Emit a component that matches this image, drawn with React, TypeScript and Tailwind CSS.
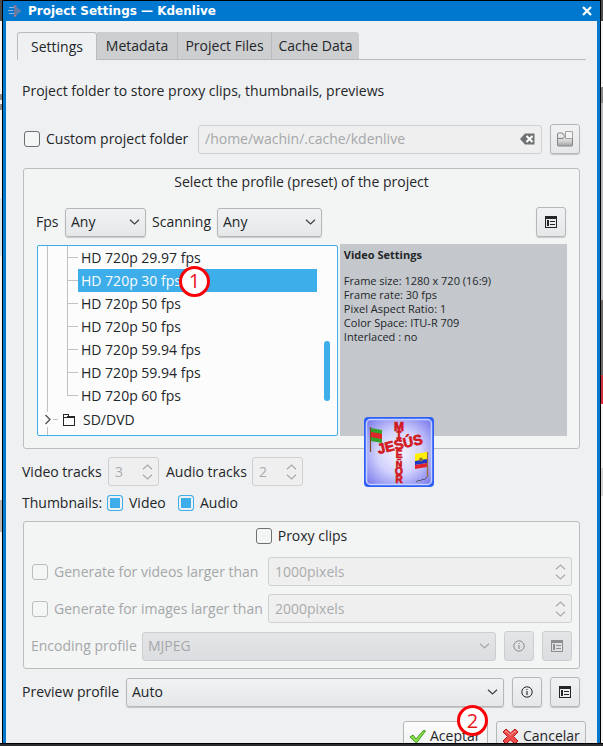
import { useState, type ReactNode } from "react";

const TREE_ITEMS = [
  "HD 720p 29.97 fps",
  "HD 720p 30 fps",
  "HD 720p 50 fps",
  "HD 720p 50 fps",
  "HD 720p 59.94 fps",
  "HD 720p 59.94 fps",
  "HD 720p 60 fps",
];

const VIDEO_SETTINGS = [
  "Frame size: 1280 x 720 (16:9)",
  "Frame rate: 30 fps",
  "Pixel Aspect Ratio: 1",
  "Color Space: ITU-R 709",
  "Interlaced : no",
];

function Chevron({ className = "" }: { className?: string }) {
  return (
    <svg viewBox="0 0 11 6" className={"h-[6px] w-[11px] fill-none stroke-current " + className} aria-hidden="true">
      <path d="M1 .7 5.5 5 10 .7" strokeWidth="1.2" />
    </svg>
  );
}

function Select({ id, value, disabled, className }: { id: string; value: string; disabled?: boolean; className: string }) {
  return (
    <div className={"relative " + className}>
      <select
        id={id}
        disabled={disabled}
        className="block h-[29px] w-full appearance-none rounded-[3px] border border-[#b4b6b8] bg-linear-to-b from-[#f1f2f3] to-[#e6e7e9] pl-[5px] text-[#232629] shadow-[0_1px_1px_rgba(0,0,0,0.18)] disabled:border-[#cbcdcf] disabled:from-[#e4e5e7] disabled:to-[#dcdde0] disabled:text-[#a5a7a9] disabled:opacity-100 disabled:shadow-none"
      >
        <option>{value}</option>
      </select>
      <Chevron className={"pointer-events-none absolute top-[11px] right-[6px] " + (disabled ? "text-[#a5a7a9]" : "text-[#3c4043]")} />
    </div>
  );
}

function Spin({ id, value, label, className }: { id: string; value: string; label?: string; className: string }) {
  return (
    <div className={"flex h-[29px] items-center rounded-[3px] border border-[#cfd0d1] bg-[#efefef] pr-[5px] pl-[6px] text-[#a9abac] " + className}>
      <input id={id} aria-label={label} disabled defaultValue={value} className="w-0 min-w-0 flex-1 bg-transparent" />
      <span className="flex flex-col gap-[4px]">
        <button type="button" disabled aria-label="Increase" className="block">
          <Chevron className="rotate-180" />
        </button>
        <button type="button" disabled aria-label="Decrease" className="block">
          <Chevron />
        </button>
      </span>
    </div>
  );
}

function Check({ label, checked, disabled }: { label: string; checked?: boolean; disabled?: boolean }) {
  return (
    <label className={"flex items-center gap-[6px] whitespace-nowrap " + (disabled ? "text-[#a5a7a9]" : "")}>
      <input
        type="checkbox"
        defaultChecked={checked}
        disabled={disabled}
        className="size-4 shrink-0 appearance-none rounded-[3px] border border-[#6d7072] bg-[#f4f5f5] checked:border-[#3daee9] checked:bg-[#3daee9] checked:shadow-[inset_0_0_0_2px_#eff0f1] disabled:border-[#babcbd]"
      />
      {label}
    </label>
  );
}

function ToolButton({ label, disabled, children }: { label: string; disabled?: boolean; children: ReactNode }) {
  return (
    <button
      type="button"
      aria-label={label}
      disabled={disabled}
      className="flex size-[30px] shrink-0 items-center justify-center rounded-[3px] border border-[#b4b6b8] bg-linear-to-b from-[#f1f2f3] to-[#e6e7e9] text-[#232629] shadow-[0_1px_1px_rgba(0,0,0,0.18)] disabled:border-[#cbcdcf] disabled:from-[#e4e5e7] disabled:to-[#dcdde0] disabled:text-[#8c8e90] disabled:shadow-none"
    >
      {children}
    </button>
  );
}

function ListIcon() {
  return (
    <svg viewBox="0 0 12 12" className="size-3 fill-current" shapeRendering="crispEdges" aria-hidden="true">
      <path d="M0 0h12v12H0zM1 3v8h10V3z" fillRule="evenodd" />
      <path d="M2 4h2v6H2zM5 5h5v1H5zM5 8h5v1H5z" />
    </svg>
  );
}

function InfoIcon() {
  return (
    <svg viewBox="0 0 12 12" className="size-3 fill-none stroke-current" aria-hidden="true">
      <circle cx="6" cy="6" r="5.2" strokeWidth="1" />
      <path d="M6 5v4M6 3v1.1" strokeWidth="1.1" />
    </svg>
  );
}

function FolderPageIcon() {
  return (
    <svg viewBox="0 0 18 18" className="size-[18px]" aria-hidden="true">
      <defs>
        <linearGradient id="folder" x2="0" y2="1">
          <stop stopColor="#f0f0f0" />
          <stop offset=".6" stopColor="#d6d6d6" />
          <stop offset="1" stopColor="#a2a2a2" />
        </linearGradient>
      </defs>
      <path d="M1.5 15V4q0-1 1-1h4l1 2h9v10q0 1-1 1h-13q-1 0-1-1z" fill="url(#folder)" stroke="#858585" />
      <path d="M2 8.5h5l1.500-2h2" fill="none" stroke="#858585" />
      <path d="M9.500 1.500h7v7h-7z" fill="#f3f3f3" stroke="#a2a2a2" />
    </svg>
  );
}

function Badge({ children, className }: { children: ReactNode; className: string }) {
  return (
    <span className={"pointer-events-none absolute z-10 flex size-[31px] items-center justify-center rounded-full border-[3px] border-[#fa0007] bg-white text-[20px] leading-none text-[#e8161b] " + className}>
      {children}
    </span>
  );
}

/* The S of JESÚS is shared with the column, so it is not repeated here. */
const STACKED = [
  { c: "M", y: 14, s: 12 },
  { c: "I", y: 22, s: 10 },
  { c: "E", y: 41, s: 10 },
  { c: "Ñ", y: 50, s: 9 },
  { c: "O", y: 58, s: 10 },
  { c: "R", y: 66, s: 10 },
];

function Logo({ className }: { className: string }) {
  return (
    <svg viewBox="0 0 70 70" className={"size-[70px] " + className} role="img" aria-label="Jesús mi Señor">
      <defs>
        <radialGradient id="glow" r=".68">
          <stop stopColor="#f6f6ff" />
          <stop offset=".5" stopColor="#d2d2fd" />
          <stop offset="1" stopColor="#7a7aec" />
        </radialGradient>
      </defs>
      <rect width="70" height="70" rx="4" fill="#2f5ff5" />
      <rect x="2.500" y="2.500" width="65" height="65" rx="4" fill="url(#glow)" stroke="#c4d0ff" strokeWidth="1.500" />
      <path d="M6.500 10v25" stroke="#7a4a25" strokeWidth="1.200" />
      <path d="m7 11 11 2v13L7 24z" fill="#35a02b" />
      <path d="m7 15 11 2v5L7 20z" fill="#e3232b" />
      <path d="M63.500 35v25" stroke="#9a6a40" strokeWidth="1.400" />
      <path d="m51 37 12-2v8l-12 2z" fill="#ffef00" />
      <path d="m51 44 12-2v4l-12 2z" fill="#1d35c9" />
      <path d="m51 48 12-2v4l-12 2z" fill="#e3232b" />
      <circle cx="57" cy="42.500" r="2" fill="#8d7a35" />
      <path d="m52 65 3-2 1 1 3-2 1 1 3-3" fill="none" stroke="#444" strokeWidth=".8" />
      <g fill="#e01b20" stroke="#c9151a" strokeWidth=".7" textAnchor="middle">
        {STACKED.map((l) => (
          <text
            key={l.c}
            x="35"
            y={l.y}
            fontSize={l.s}
            className={l.c === "I" ? "font-['DejaVu_Sans_Mono',monospace] font-bold" : "font-['Liberation_Sans',sans-serif] font-bold"}
          >
            {l.c}
          </text>
        ))}
        <text x="36" y="32" fontSize="14" transform="rotate(-13 36 28)" className="font-['Liberation_Sans',sans-serif] font-bold">
          JESÚS
        </text>
      </g>
    </svg>
  );
}

function ProfileTree() {
  const [selected, setSelected] = useState(1);
  return (
    <div role="tree" aria-label="Profiles" className="relative mt-px h-[191px] min-w-0 flex-[304_1_0%] rounded-[2px] border border-[#3daee9] bg-[#fcfcfc]">
      {TREE_ITEMS.map((name, i) => {
        const last = i === TREE_ITEMS.length - 1;
        const on = i === selected;
        return (
          <div key={i} role="treeitem" aria-selected={on} onClick={() => setSelected(i)} className="flex h-[23px] items-center pr-[20px]">
            <span className="w-[10px] self-stretch border-r border-[#c0c2c3]" />
            <span className={"w-[20px] border-r border-[#c0c2c3] " + (last ? "h-3 self-start" : "self-stretch")} />
            <span className="h-px w-[10px] bg-[#c0c2c3]" />
            <span className={"flex h-[23px] flex-1 items-center pl-[3px] " + (on ? "bg-[#3daee9] text-[#fcfcfc]" : "")}>
              <span className="relative">
                {name}
                {on && <Badge className="top-[-5px] left-[98px]">1</Badge>}
              </span>
            </span>
          </div>
        );
      })}
      <div role="treeitem" aria-expanded="false" aria-selected="false" className="flex h-[28px] items-center pb-[3px]">
        <svg viewBox="0 0 24 28" className="-mb-[3px] h-[28px] w-[24px] fill-none" aria-hidden="true">
          <path d="M9.500 0v5M9.500 20v8M15 12.500h5" stroke="#c0c2c3" />
          <path d="m7.500 8 4.500 4.500L7.500 17" stroke="#4b4e51" strokeWidth="1.300" />
        </svg>
        <svg viewBox="0 0 12 12" className="ml-px size-3" shapeRendering="crispEdges" aria-hidden="true">
          <path d="M0 0h6v2h6v10H0zM1 4v7h10V4zM1 1v2h2l2-1V1z" fill="#232629" fillRule="evenodd" />
        </svg>
        <span className="pl-2">SD/DVD</span>
      </div>
      <span className="absolute top-[95px] right-[7px] h-[60px] w-[6px] rounded-full bg-[#3daee9]" />
    </div>
  );
}

const TABS = [
  { name: "Settings", width: "w-[80px]" },
  { name: "Metadata", width: "w-[81px]" },
  { name: "Project Files", width: "w-[94px]" },
  { name: "Cache Data", width: "w-[87px]" },
];

function Tabs() {
  return (
    <div role="tablist" className="mx-[11px] flex h-7 border-b border-[#b9bbbd]">
      {TABS.map((t, i) => (
        <button
          key={t.name}
          type="button"
          role="tab"
          aria-selected={i === 0}
          className={
            t.width +
            " h-7 shrink-0 border-[#b9bbbd] pt-px whitespace-nowrap " +
            (i === 0
              ? "rounded-t-[3px] border-x border-t bg-[#eff0f1]"
              : "border-b bg-[#cdced0] " + (i === TABS.length - 1 ? "rounded-tr-[3px]" : "border-r"))
          }
        >
          {t.name}
        </button>
      ))}
    </div>
  );
}

function DialogWindow() {
  return (
    <section aria-label="Project Settings" className="flex min-w-0 flex-1 flex-col overflow-hidden border-x border-t border-black bg-[#0078cf]">
      <header className="flex h-5 shrink-0 items-center pr-2 pl-[5px] text-white">
        <svg viewBox="0 0 14 12" className="h-3 w-[14px]" aria-hidden="true">
          <path d="M1 2.500h5M0 5.500h5M1 8.500h5" stroke="#8fb6dc" />
          <path d="M8 1.500 13.500 6 8 10.500z" fill="#5b80ad" />
          <path d="M5.500 1h3M7 1v10M5.500 11h3" stroke="#e8776a" />
        </svg>
        <h1 className="flex-1 pl-[6px] font-['DejaVu_Sans',sans-serif] text-[12px] font-bold">Project Settings — Kdenlive</h1>
        <button type="button" aria-label="Close">
          <svg viewBox="0 0 10 10" className="block size-[10px] stroke-white" aria-hidden="true">
            <path d="m1 1 8 8M9 1 1 9" strokeWidth="2.200" />
          </svg>
        </button>
      </header>

      <div className="mx-[3px] flex-1 bg-[#eff0f1] pt-[11px]">
        <Tabs />
        <main className="px-4 pt-[21px]">
          <p className="whitespace-nowrap">Project folder to store proxy clips, thumbnails, previews</p>

          <div className="mt-[23px] flex items-center pr-px pl-[2px]">
            <div className="w-[174px] shrink-0">
              <Check label="Custom project folder" />
            </div>
            <div className="flex h-[29px] min-w-0 flex-1 items-center rounded-[3px] border border-[#cfd0d1] bg-[#efefef] pr-[6px] pl-[6px]">
              <input aria-label="Project folder path" disabled defaultValue="/home/wachin/.cache/kdenlive" className="min-w-0 flex-1 text-[#a5a7a9]" />
              <svg viewBox="0 0 15 12" className="h-3 w-[15px]" aria-hidden="true">
                <path d="m0 6 5-5.500h9.500v11H5z" fill="#6f7173" />
                <path d="m6.500 3 6 6M12.500 3l-6 6" stroke="#fff" strokeWidth="2" />
              </svg>
            </div>
            <div className="ml-2">
              <ToolButton label="Choose folder">
                <FolderPageIcon />
              </ToolButton>
            </div>
          </div>

          <fieldset className="mx-px mt-[14px] rounded-[3px] border border-[#bbbdbe] bg-[#f3f4f4] px-[12px] pt-[3px] pb-[12px]">
            <p className="text-center">Select the profile (preset) of the project</p>
            <div className="mt-[15px] flex items-center pr-px">
              <label htmlFor="fps" className="w-[29px] shrink-0">Fps</label>
              <Select id="fps" value="Any" className="w-[81px]" />
              <label htmlFor="scanning" className="ml-[6px] w-[65px] shrink-0">Scanning</label>
              <Select id="scanning" value="Any" className="w-[105px]" />
              <span className="flex-1" />
              <ToolButton label="Manage profiles">
                <ListIcon />
              </ToolButton>
            </div>
            <div className="mt-[7px] flex gap-[2px] pl-px">
              <ProfileTree />
              <div className="relative min-w-0 flex-[227_1_0%] bg-[#c4c8cc] pt-1 pl-1 text-[11px] leading-[14px]">
                <h2 className="mb-3 font-bold">Video Settings</h2>
                {VIDEO_SETTINGS.map((line) => (
                  <p key={line}>{line}</p>
                ))}
                <Logo className="absolute top-[173px] left-[24px]" />
              </div>
            </div>
          </fieldset>

          <div className="mt-2 flex items-center">
            <label htmlFor="vtracks" className="w-[86px] shrink-0">Video tracks</label>
            <Spin id="vtracks" value="3" className="w-[51px]" />
            <label htmlFor="atracks" className="ml-[7px] w-[86px] shrink-0">Audio tracks</label>
            <Spin id="atracks" value="2" className="w-[51px]" />
          </div>

          <div className="mt-[7px] flex items-center">
            <span className="w-[85px] shrink-0">Thumbnails:</span>
            <div className="w-[71px]">
              <Check label="Video" checked />
            </div>
            <Check label="Audio" checked />
          </div>

          <fieldset className="mx-px mt-2 rounded-[3px] border border-[#bbbdbe] bg-[#f3f4f4] px-[7px] pt-1 pb-[7px]">
            <div className="flex justify-center">
              <Check label="Proxy clips" />
            </div>
            <div className="mt-[11px] flex items-center pl-px">
              <div className="w-[236px] shrink-0">
                <Check label="Generate for videos larger than" disabled />
              </div>
              <Spin id="videos" label="Minimum video width" value="1000pixels" className="flex-1" />
            </div>
            <div className="mt-2 flex items-center pl-px">
              <div className="w-[236px] shrink-0">
                <Check label="Generate for images larger than" disabled />
              </div>
              <Spin id="images" label="Minimum image width" value="2000pixels" className="flex-1" />
            </div>
            <div className="mt-2 flex items-center gap-2">
              <div className="flex flex-1 items-center">
                <label htmlFor="encoding" className="w-[111px] shrink-0 whitespace-nowrap text-[#a5a7a9]">Encoding profile</label>
                <Select id="encoding" value="MJPEG" disabled className="flex-1" />
              </div>
              <ToolButton label="Encoding profile info" disabled>
                <InfoIcon />
              </ToolButton>
              <ToolButton label="Manage encoding profiles" disabled>
                <ListIcon />
              </ToolButton>
            </div>
          </fieldset>

          <div className="mt-2 flex items-center gap-2 pr-px">
            <div className="flex flex-1 items-center">
              <label htmlFor="preview" className="w-[104px] shrink-0 whitespace-nowrap">Preview profile</label>
              <Select id="preview" value="Auto" className="flex-1" />
            </div>
            <ToolButton label="Preview profile info">
              <InfoIcon />
            </ToolButton>
            <ToolButton label="Manage preview profiles">
              <ListIcon />
            </ToolButton>
          </div>
        </main>

        <footer className="mt-[14px] flex justify-end gap-2 pr-[11px]">
          <button type="button" className="relative flex h-[30px] w-[85px] items-center gap-1 rounded-[3px] border border-[#b4b6b8] bg-linear-to-b from-[#fcfcfc] to-[#eff0f1] pl-[5px]">
            <svg viewBox="0 0 17 15" className="h-[15px] w-[17px] shrink-0" aria-hidden="true">
              <path d="m1 8 3-2 3 4 8-9 1.500 1L7.500 14z" fill="#8be04a" stroke="#3c9a1f" />
            </svg>
            Aceptar
            <Badge className="top-[-17px] left-[53px]">2</Badge>
          </button>
          <button type="button" className="flex h-[30px] w-[90px] items-center gap-1 rounded-[3px] border border-[#b4b6b8] bg-linear-to-b from-[#f1f2f3] to-[#e6e7e9] pl-[5px]">
            <svg viewBox="0 0 17 17" className="size-[17px] shrink-0" aria-hidden="true">
              <path d="m1 4 3-3 4.500 4L13 1l3 3-4.500 4.500L16 13l-3 3-4.500-4L4 16l-3-3 4.500-4.500z" fill="#ee4b4b" stroke="#b51717" />
              <path d="m3 4 1-1 4.500 4L13 3l1 1" fill="none" stroke="#ff9a94" />
            </svg>
            Cancelar
          </button>
        </footer>
      </div>
    </section>
  );
}

export default function App() {
  return (
    <div className="flex h-screen flex-col overflow-hidden bg-[#2a2c2e] font-['Open_Sans','Noto_Sans',sans-serif] text-[14px] leading-5 text-[#232629]">
      <div className="flex min-h-0 flex-1">
        <div className="flex w-[2px] shrink-0 flex-col bg-[#f4f4f4]">
          <span className="h-[21px] bg-[#4d4d4d]" />
          <span className="mt-[73px] h-[6px] bg-[#8f8f8f]" />
          <span className="mt-1 h-[6px] bg-[#8f8f8f]" />
          <span className="mt-[88px] h-[58px] bg-[#d5e6f3]" />
          <span className="mt-[244px] h-[32px] bg-[#b5b5b5]" />
        </div>
        <DialogWindow />
        <div className="flex w-[2px] shrink-0 flex-col bg-[#f4f4f4]">
          <span className="h-[21px] bg-[#4d4d4d]" />
          <span className="mt-[66px] h-[16px] bg-[#8a8a8a]" />
          <span className="h-[197px] bg-[#b9b9bb]" />
          <span className="h-[75px] bg-[#6e6a68]" />
          <span className="h-[29px] bg-[#d8333c]" />
          <span className="mt-[64px] h-[28px] bg-[#d6d6d6]" />
        </div>
      </div>
      <div className="h-[3px] shrink-0 border-t border-black" />
    </div>
  );
}
